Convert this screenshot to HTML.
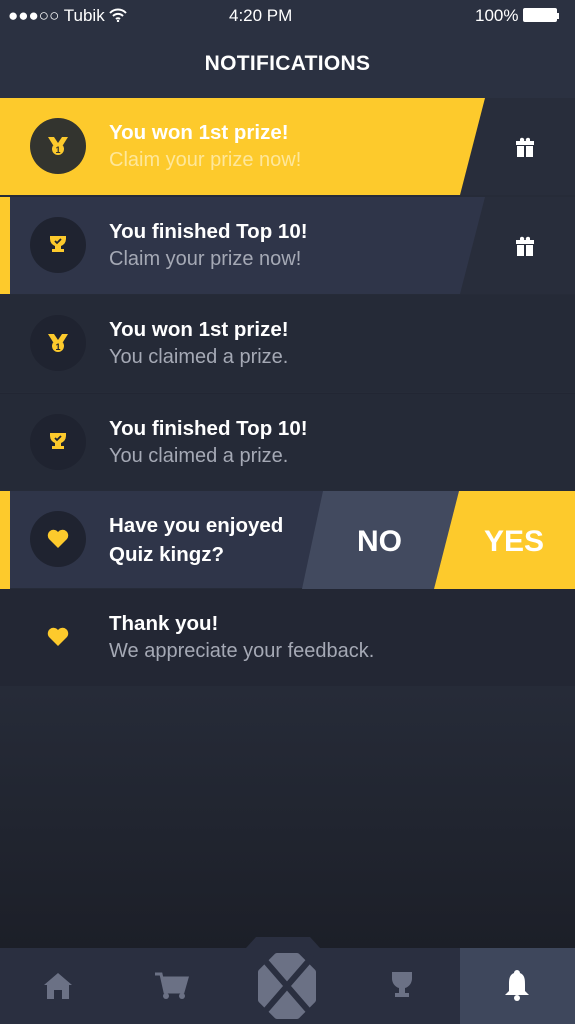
<!DOCTYPE html>
<html><head><meta charset="utf-8"><style>
*{margin:0;padding:0;box-sizing:border-box}
body{width:575px;height:1024px;overflow:hidden;background:linear-gradient(#262b38 0,#262b38 690px,#1c1f28 948px);font-family:"Liberation Sans",sans-serif;position:relative;color:#fff}
.hdr{position:absolute;left:0;top:0;width:575px;height:98px;background:#2b3141}
.sb{position:absolute;top:6px;font-size:17px;color:#fff}
.title{position:absolute;top:52px;width:100%;text-align:center;font-weight:bold;font-size:21px;letter-spacing:.3px}
.row{position:absolute;left:0;width:575px;height:97px}
.row svg.bg{position:absolute;left:0;top:0}
.ic{position:absolute;left:30px;top:20px;width:56px;height:56px;border-radius:50%;background:#1f2330}
.ic svg{position:absolute;left:16px;top:16px}
.t{position:absolute;left:109px;top:21px;font-weight:bold;font-size:20.5px;line-height:28px}
.s{position:absolute;left:109px;top:49px;font-size:20px;color:#a5a9b5;line-height:26px}
.tab{position:absolute;top:948px;height:76px;background:#2a2f40;width:575px}
</style></head><body>
<div class="hdr">
<div class="sb" style="left:8px">●●●○○ Tubik <svg width="18" height="14" viewBox="0 0 18 14" style="vertical-align:-1px"><path d="M1 5a11 11 0 0 1 16 0M4 8a7 7 0 0 1 10 0M7 11a3 3 0 0 1 4 0" stroke="#fff" stroke-width="2" fill="none"/><circle cx="9" cy="13" r="1.2" fill="#fff"/></svg></div>
<div class="sb" style="left:229px">4:20 PM</div>
<div class="sb" style="left:475px">100% <span style="display:inline-block;width:34px;height:14px;background:#fff;border-radius:2px;vertical-align:-1px"></span><span style="display:inline-block;width:2px;height:6px;background:#fff;vertical-align:2px"></span></div>
<div class="title">NOTIFICATIONS</div>
</div>

<div class="row" style="top:98px;background:#282d3b">
<svg class="bg" width="575" height="97"><polygon points="0,0 485,0 460,97 0,97" fill="#fdca2c"/></svg>
<div class="ic" style="background:#33342f"><svg width="24" height="24" viewBox="0 0 24 24"><path d="M2 3h6l4 6 4-6h6l-5 8H7z" fill="#fdca2c"/><circle cx="12" cy="15" r="6" fill="#fdca2c"/><text x="12" y="19" font-size="9" font-weight="bold" text-anchor="middle" fill="#33342f" font-family="Liberation Sans">1</text></svg></div>
<div class="t">You won 1st prize!</div><div class="s" style="color:#fee79a">Claim your prize now!</div>
<svg style="position:absolute;left:514px;top:38px" width="22" height="22" viewBox="0 0 22 22"><path d="M6 3a2 2 0 0 1 4 2h2a2 2 0 0 1 4-2v2h4v4H2V5h4z" fill="#fff"/><rect x="3" y="10" width="7" height="11" fill="#fff"/><rect x="12" y="10" width="7" height="11" fill="#fff"/></svg>
</div>
<div class="row" style="top:197px;background:#282d3b">
<svg class="bg" width="575" height="97"><rect x="0" y="0" width="10" height="97" fill="#fdca2c"/><polygon points="10,0 485,0 460,97 10,97" fill="#2f3549"/></svg>
<div class="ic"><svg width="24" height="24" viewBox="0 0 24 24"><path d="M4 3h16v3a8 8 0 0 1-5 7v3h3v3H6v-3h3v-3a8 8 0 0 1-5-7z" fill="#fdca2c"/><path d="M9 8l2 2 4-4" stroke="#1f2330" stroke-width="1.8" fill="none"/></svg></div>
<div class="t">You finished Top 10!</div><div class="s">Claim your prize now!</div>
<svg style="position:absolute;left:514px;top:38px" width="22" height="22" viewBox="0 0 22 22"><path d="M6 3a2 2 0 0 1 4 2h2a2 2 0 0 1 4-2v2h4v4H2V5h4z" fill="#fff"/><rect x="3" y="10" width="7" height="11" fill="#fff"/><rect x="12" y="10" width="7" height="11" fill="#fff"/></svg>
</div>
<div class="row" style="top:295px;background:#252a37">
<div class="ic"><svg width="24" height="24" viewBox="0 0 24 24"><path d="M2 3h6l4 6 4-6h6l-5 8H7z" fill="#fdca2c"/><circle cx="12" cy="15" r="6" fill="#fdca2c"/><text x="12" y="19" font-size="9" font-weight="bold" text-anchor="middle" fill="#1f2330" font-family="Liberation Sans">1</text></svg></div>
<div class="t">You won 1st prize!</div><div class="s">You claimed a prize.</div>
</div>
<div class="row" style="top:393px;background:#252a37;border-top:1px solid #222633">
<div class="ic"><svg width="24" height="24" viewBox="0 0 24 24"><path d="M4 3h16v3a8 8 0 0 1-5 7v3h3v3H6v-3h3v-3a8 8 0 0 1-5-7z" fill="#fdca2c"/><path d="M9 8l2 2 4-4" stroke="#1f2330" stroke-width="1.8" fill="none"/></svg></div>
<div class="t">You finished Top 10!</div><div class="s">You claimed a prize.</div>
</div>
<div class="row" style="top:491px;background:#2f3549">
<svg class="bg" width="575" height="98"><rect x="0" y="0" width="10" height="98" fill="#fdca2c"/><polygon points="323,0 459,0 434,98 302,98" fill="#424a5f"/><polygon points="459,0 575,0 575,98 434,98" fill="#fdca2c"/></svg>
<div class="ic"><svg width="24" height="24" viewBox="0 0 24 24"><path d="M12 21L3 12a5 5 0 0 1 9-7 5 5 0 0 1 9 7z" fill="#fdca2c"/></svg></div>
<div class="t" style="top:20px;line-height:29px">Have you enjoyed<br>Quiz kingz?</div>
<div style="position:absolute;left:357px;top:34px;font-weight:bold;font-size:30px">NO</div>
<div style="position:absolute;left:484px;top:34px;font-weight:bold;font-size:30px">YES</div>
</div>
<div class="row" style="top:589px;background:#232734">
<div class="ic" style="background:transparent"><svg width="24" height="24" viewBox="0 0 24 24"><path d="M12 21L3 12a5 5 0 0 1 9-7 5 5 0 0 1 9 7z" fill="#fdca2c"/></svg></div>
<div class="t">Thank you!</div><div class="s">We appreciate your feedback.</div>
</div>

<svg style="position:absolute;left:230px;top:937px" width="116" height="12"><polygon points="26,0 80,0 90,11 16,11" fill="#2a2f40"/></svg>
<div class="tab">
<div style="position:absolute;left:460px;top:0;width:115px;height:76px;background:#3e475c"></div>
<svg style="position:absolute;left:42px;top:24px" width="32" height="28" viewBox="0 0 32 28"><path d="M16 1L2 13h3v14h7v-9h8v9h7V13h3z" fill="#6b7185"/></svg>
<svg style="position:absolute;left:154px;top:24px" width="36" height="28" viewBox="0 0 36 28"><path d="M1 2h6l4 18h18l4-14H9" fill="none" stroke="#6b7185" stroke-width="3"/><path d="M9 6h24l-4 14H11z" fill="#6b7185"/><circle cx="12" cy="24" r="3" fill="#6b7185"/><circle cx="28" cy="24" r="3" fill="#6b7185"/></svg>
<svg style="position:absolute;left:255px;top:4px" width="64" height="68" viewBox="0 0 64 68">
<polygon points="22,4 42,4 58,20 58,48 42,64 22,64 6,48 6,20" fill="#6b7185" stroke="#6b7185" stroke-width="6" stroke-linejoin="round"/>
<path d="M6 4L58 64M58 4L6 64" stroke="#2a2f40" stroke-width="6"/>
</svg>
<svg style="position:absolute;left:388px;top:22px" width="28" height="30" viewBox="0 0 28 30"><path d="M4 2h20v6a10 10 0 0 1-7 10v5h4v4H7v-4h4v-5a10 10 0 0 1-7-10z" fill="#6b7185"/></svg>
<svg style="position:absolute;left:503px;top:20px" width="28" height="34" viewBox="0 0 28 34"><path d="M14 2a3 3 0 0 1 3 3c5 2 5 7 5 12v6l4 4H2l4-4v-6c0-5 0-10 5-12a3 3 0 0 1 3-3z" fill="#fff"/><circle cx="14" cy="30" r="3" fill="#fff"/></svg>
</div>
</body></html>
